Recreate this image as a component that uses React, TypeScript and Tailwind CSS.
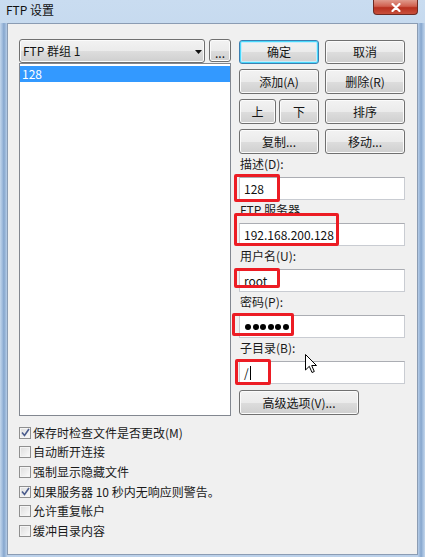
import React from "react";

const btnBase =
  "flex items-center justify-center rounded-[3px] border border-[#707070] bg-[linear-gradient(#f2f2f2_0%,#ebebeb_50%,#dddddd_51%,#cfcfcf_100%)] shadow-[inset_0_0_0_1px_#fbfbfb] text-[12px] leading-[16px] text-[#151515]";

function Btn({ children, className = "" }: { children: React.ReactNode; className?: string }) {
  return <div className={`${btnBase} ${className}`}>{children}</div>;
}

function DefaultBtn({ children, className = "" }: { children: React.ReactNode; className?: string }) {
  return (
    <div
      className={`flex items-center justify-center rounded-[3px] border border-[#3c7fb1] bg-[linear-gradient(#f2f2f2_0%,#ebebeb_50%,#dddddd_51%,#cfcfcf_100%)] shadow-[inset_0_0_0_1px_#48d8fb,inset_0_0_0_2px_#c5ecfb] text-[12px] leading-[16px] text-[#151515] ${className}`}
    >
      {children}
    </div>
  );
}

function Field({ label, children }: { label: string; children?: React.ReactNode }) {
  return (
    <>
      <div className="h-[23px] flex items-end pb-[5px] pl-[1px] text-[12px] leading-[16px] text-[#1a1a1a]">{label}</div>
      <div className="h-[23px] w-[166px] flex items-center bg-white border border-[#c9ccd2] border-t-[#abadb3] pl-[4px] text-[12px] leading-[16px] text-[#111]">
        {children}
      </div>
    </>
  );
}

function Check({ checked, label }: { checked?: boolean; label: string }) {
  return (
    <div className="h-[19.6px] flex items-center gap-[2px]">
      <div className="w-[12px] h-[12px] border border-[#8f8f8f] bg-[linear-gradient(135deg,#dcdcdc,#fbfbfb)] shadow-[inset_0_0_0_1px_#f4f4f4] flex items-center justify-center">
        {checked && (
          <svg width="9" height="9" viewBox="0 0 9 9">
            <path d="M1 4.5 L3.5 7.5 L8 1" fill="none" stroke="#4a5b8c" strokeWidth="1.6" />
          </svg>
        )}
      </div>
      <span className="text-[12px] leading-[16px] text-[#1a1a1a]">{label}</span>
    </div>
  );
}

function RedBox({ l, t, w, h }: { l: number; t: number; w: number; h: number }) {
  return (
    <div
      className="absolute border-[3px] border-[#ec1c24] rounded-[2px]"
      style={{ left: l, top: t, width: w, height: h }}
    />
  );
}

export default function App() {
  return (
    <div className="relative w-[425px] h-[557px] overflow-hidden flex flex-col bg-[linear-gradient(180deg,#c9dcf0_0%,#b8cfe8_30%,#c4d8ee_70%,#bcd1ea_100%)] font-['Noto_Sans_CJK_SC','Noto_Sans',sans-serif]">
      {/* title bar */}
      <div className="h-[23px] flex items-start shrink-0">
        <div className="pl-[6px] pt-[2px] text-[12px] leading-[16px] text-[#111]">FTP 设置</div>
        <div className="ml-auto mr-[7px] w-[45px] h-[15px] rounded-b-[4px] border border-t-0 border-[#6e2a22] bg-[linear-gradient(#e09a8c_0%,#d0604f_45%,#b8301f_55%,#c8503c_100%)] flex items-center justify-center">
          <svg width="10" height="9" viewBox="0 0 10 9">
            <path d="M1.5 1 L8.5 8 M8.5 1 L1.5 8" stroke="#ffffff" strokeWidth="2.2" strokeLinecap="round" />
          </svg>
        </div>
      </div>

      <div className="flex flex-1">
        <div className="w-[7px] bg-[linear-gradient(90deg,#c3d6ec_0%,#9fbbdc_35%,#86a6cd_55%,#b6cde8_100%)]" />
        <div className="w-[411px] h-[532px] border border-[#8b9cb3] bg-[#f0f0f0] pl-[11px] pt-[15px]">
          <div className="flex gap-[8px]">
            {/* left column */}
            <div className="w-[212px] flex flex-col">
              <div className="flex gap-[4px] h-[24px]">
                <div className={`${btnBase} w-[186px] h-[24px] !justify-start pl-[3px] relative`}>
                  <span>FTP 群组 1</span>
                  <svg className="absolute left-[175px] top-[10px]" width="7" height="4" viewBox="0 0 7 4">
                    <path d="M0 0 L7 0 L3.5 4 Z" fill="#111" />
                  </svg>
                </div>
                <Btn className="w-[22px] h-[23px] !items-end pb-[3px]">
                  <span className="leading-[10px]">...</span>
                </Btn>
              </div>
              <div className="h-[353px] bg-white border border-[#828790] pt-[2px]">
                <div className="h-[16px] bg-[#3399ff] text-white text-[12px] leading-[16px] pl-[2px]">128</div>
              </div>
            </div>

            {/* right column */}
            <div className="w-[166px] flex flex-col">
              <div className="flex gap-[6px] mt-[1px]">
                <DefaultBtn className="w-[80px] h-[24px]">确定</DefaultBtn>
                <Btn className="w-[80px] h-[24px]">取消</Btn>
              </div>
              <div className="flex gap-[6px] mt-[5px]">
                <Btn className="w-[80px] h-[25px]">添加(A)</Btn>
                <Btn className="w-[80px] h-[25px]">删除(R)</Btn>
              </div>
              <div className="flex gap-[6px] mt-[5px]">
                <div className="w-[80px] flex gap-[3px]">
                  <Btn className="w-[37px] h-[25px]">上</Btn>
                  <Btn className="w-[40px] h-[25px]">下</Btn>
                </div>
                <Btn className="w-[80px] h-[25px]">排序</Btn>
              </div>
              <div className="flex gap-[6px] mt-[5px]">
                <Btn className="w-[80px] h-[25px]">复制...</Btn>
                <Btn className="w-[80px] h-[25px]">移动...</Btn>
              </div>

              <Field label="描述(D):">128</Field>
              <Field label="FTP 服务器">192.168.200.128</Field>
              <Field label="用户名(U):">root</Field>
              <Field label="密码(P):">
                <div className="flex gap-[1.5px] pl-[1px]">
                  {[0, 1, 2, 3, 4, 5].map((i) => (
                    <div key={i} className="w-[6px] h-[6px] rounded-full bg-black" />
                  ))}
                </div>
              </Field>
              <Field label="子目录(B):">
                <span>/</span>
                <div className="w-[1px] h-[14px] bg-black ml-[1px]" />
              </Field>
              <Btn className="w-[120px] h-[25px] mt-[6px]">高级选项(V)...</Btn>
            </div>
          </div>

          <div className="mt-[7px] flex flex-col">
            <Check checked label="保存时检查文件是否更改(M)" />
            <Check label="自动断开连接" />
            <Check label="强制显示隐藏文件" />
            <Check checked label="如果服务器 10 秒内无响应则警告。" />
            <Check label="允许重复帐户" />
            <Check label="缓冲目录内容" />
          </div>
        </div>
        <div className="w-[7px] bg-[linear-gradient(90deg,#b6cde8_0%,#86a6cd_45%,#9fbbdc_65%,#c3d6ec_100%)]" />
      </div>

      {/* annotations */}
      <RedBox l={234} t={174} w={46} h={28} />
      <RedBox l={234} t={213} w={105} h={33} />
      <RedBox l={234} t={268} w={46} h={20} />
      <RedBox l={232} t={313} w={62} h={23} />
      <RedBox l={235} t={359} w={36} h={26} />

      {/* mouse cursor */}
      <svg className="absolute left-[305px] top-[354px]" width="13" height="20" viewBox="0 0 13 20">
        <path
          d="M0.5 0.5 L0.5 16 L4.3 12.3 L7 18.5 L9.3 17.5 L6.7 11.5 L11.5 11.5 Z"
          fill="#ffffff"
          stroke="#000000"
          strokeWidth="1"
          strokeLinejoin="round"
        />
      </svg>
    </div>
  );
}
